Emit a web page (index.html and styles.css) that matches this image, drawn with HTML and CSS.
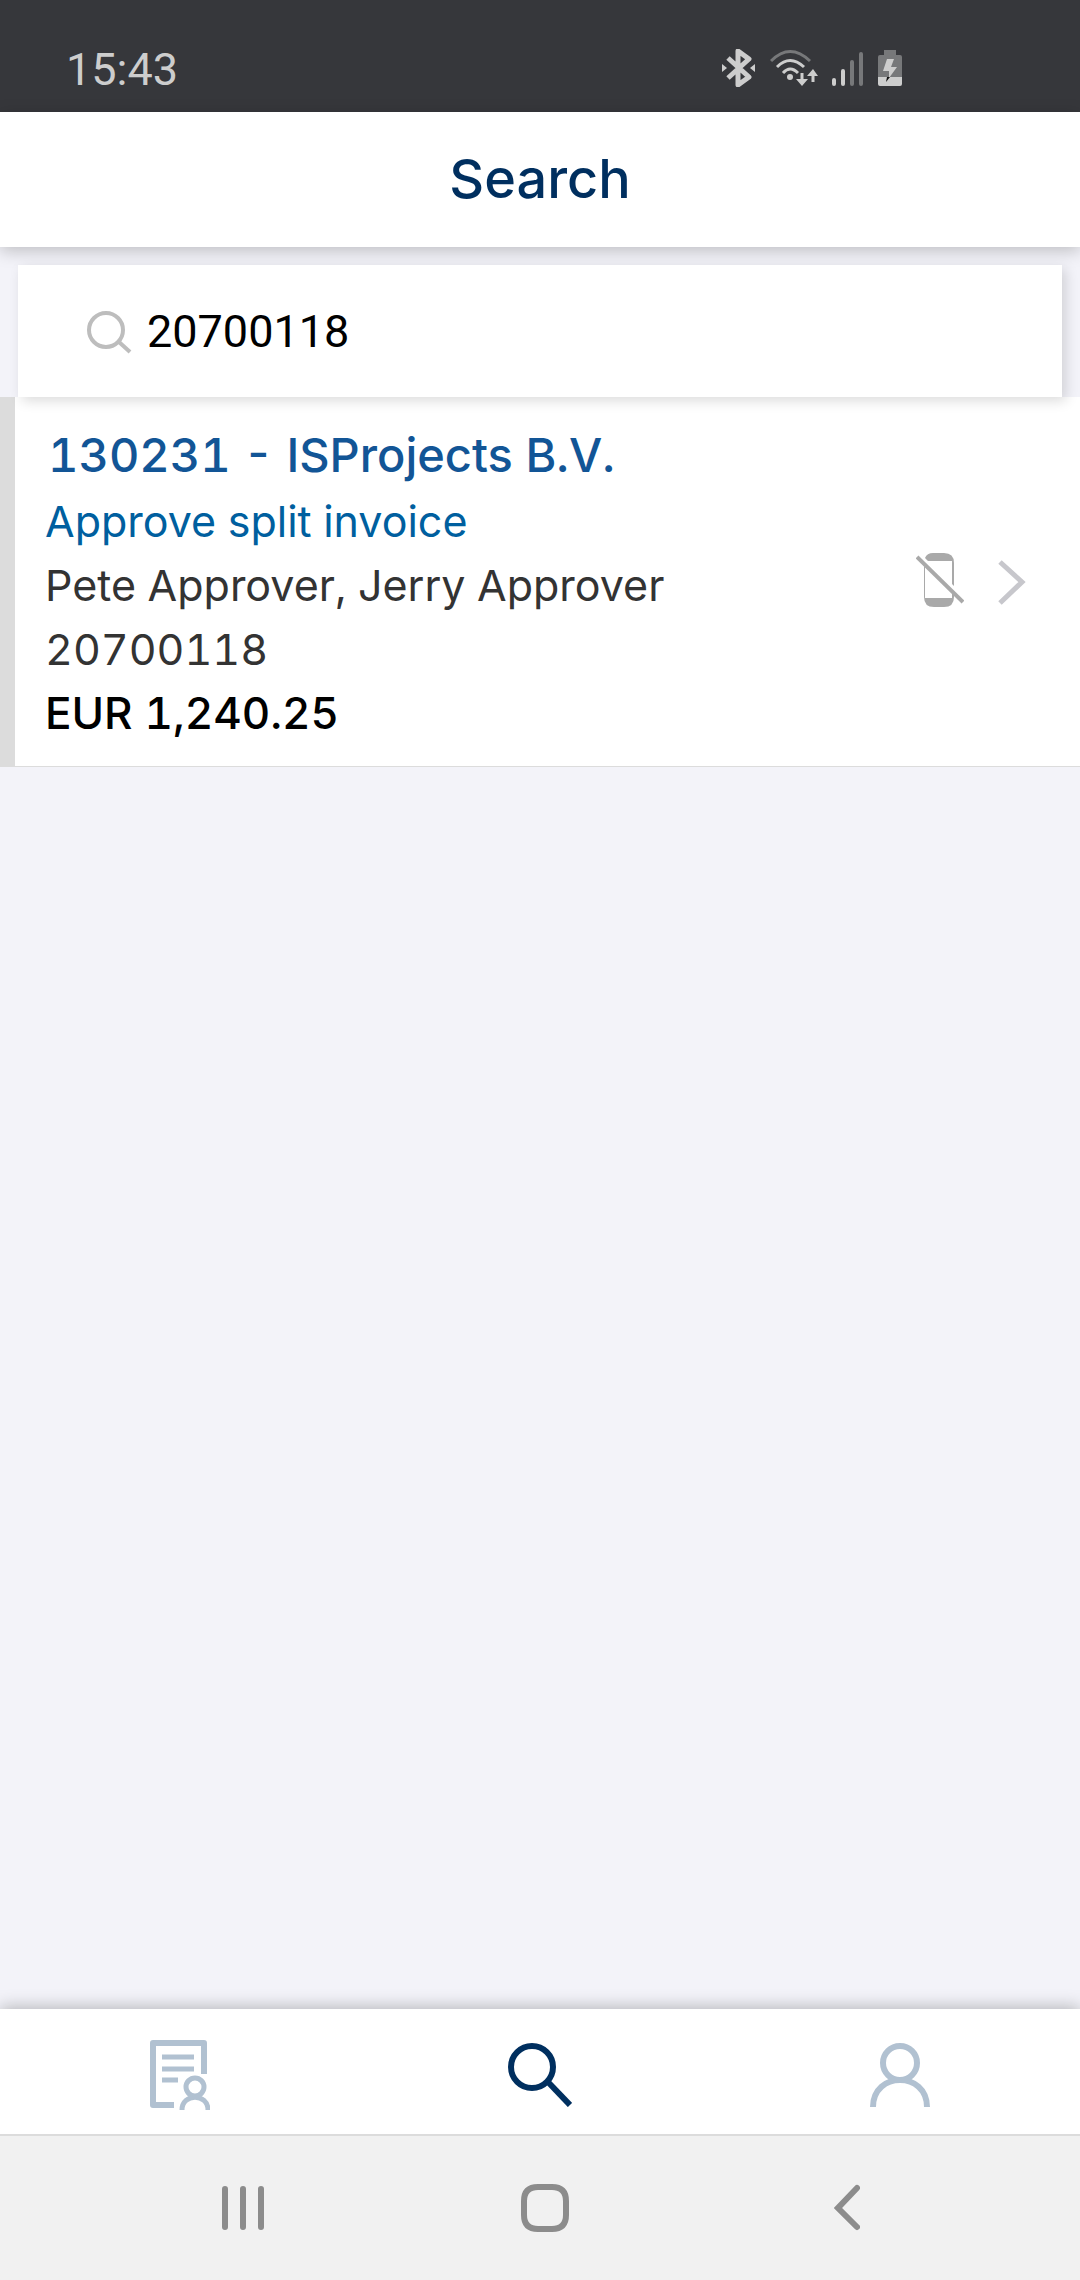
FILE: index.html
```html
<!DOCTYPE html>
<html lang="en">
<head>
<meta charset="utf-8">
<meta name="viewport" content="width=device-width">
<title>Search</title>
<link rel="stylesheet" href="styles.css">
</head>
<body>
<div class="status-bar">
  <span class="clock">15:43</span>
  <div class="status-icons">
    <svg width="34" height="38" viewBox="0 0 34 38" aria-hidden="true"><path d="M6 9 L27 28 L16 36 V2 L27 10 L6 29" fill="none" stroke="#cdcdcd" stroke-width="5" stroke-linejoin="round"/><path d="M0 15 L5 19 L0 23Z M33 15 L28 19 L33 23Z" fill="#cdcdcd"/></svg>
    <svg width="48" height="38" viewBox="0 0 48 38" aria-hidden="true"><g fill="none" stroke-width="3"><path d="M1 12 Q20 -7 40 12" stroke="#77787a"/><path d="M7 18 Q20 5 34 18 M13 24 Q20 16 28 24" stroke="#cdcdcd"/><path d="M32 24 V33 M43 33 V24" stroke="#cdcdcd"/></g><circle cx="20" cy="28" r="3" fill="#cdcdcd"/><path d="M26 30 H38 L32 37Z M37 27 H48 L43 20Z" fill="#cdcdcd"/></svg>
    <svg width="32" height="38" viewBox="0 0 32 38" aria-hidden="true"><g stroke-width="4" stroke-linecap="round"><path d="M2 31 V35 M11 22 V35" stroke="#cdcdcd"/><path d="M20 13 V35 M29 5 V35" stroke="#77787a"/></g></svg>
    <svg width="24" height="38" viewBox="0 0 24 38" aria-hidden="true"><path d="M6 1 H18 V6 H22 Q24 6 24 8 V28 H0 V8 Q0 6 2 6 H6Z" fill="#77787a"/><path d="M0 28 H24 V35 Q24 37 22 37 H2 Q0 37 0 35Z M9 10 H16 L13 18 H19 L11 29 L11 22 H5Z" fill="#cdcdcd"/><path d="M9 28 H12 L8 33Z" fill="#111"/></svg>
  </div>
</div>

<header class="app-header"><h1 class="page-title">Search</h1></header>

<main class="content">
  <label class="search-card">
    <svg width="46" height="46" viewBox="0 0 46 46" fill="none" stroke="#bdbdbd" stroke-width="4" aria-hidden="true"><circle cx="20" cy="21" r="17"/><path d="M33 33 L44 43"/></svg>
    <input class="search-input" type="text" value="20700118" aria-label="Search">
  </label>
  <a class="result" href="#">
    <span class="result-text">
      <span class="result-title">130231 - ISProjects B.V.</span>
      <span class="result-step">Approve split invoice</span>
      <span class="result-line">Pete Approver, Jerry Approver</span>
      <span class="result-line">20700118</span>
      <span class="result-amount">EUR 1,240.25</span>
    </span>
    <svg width="48" height="62" viewBox="0 0 48 62" aria-hidden="true"><path d="M9 6 Q11 1 17 1 H28 Q38 1 38 11 V34 L36 32 V9 H12Z M8 14 L9 15 V46 H36 V41 L38 43 V45 Q38 55 28 55 H18 Q8 55 8 45Z" fill="#a9a9a9"/><path d="M1 5 L47 50" stroke="#a9a9a9" stroke-width="4"/></svg>
    <svg width="28" height="46" viewBox="0 0 28 46" fill="none" stroke="#c7c7cc" stroke-width="5" aria-hidden="true"><path d="M2 2 L24 22 L2 43"/></svg>
  </a>
</main>

<nav class="tab-bar" aria-label="Main">
  <button class="tab" type="button" aria-label="Approvals">
    <svg width="60" height="70" viewBox="0 0 60 70" fill="none" stroke="#b1c1d1" aria-hidden="true"><path d="M24 65 H3 V3 H54 V34" stroke-width="6" stroke-linejoin="round"/><path d="M12 17 H44 M12 29 H44 M12 40 H28" stroke-width="5"/><circle cx="45" cy="47" r="9" stroke-width="5"/><path d="M32 70 C32 53 58 53 58 70" stroke-width="5"/></svg>
  </button>
  <button class="tab" type="button" aria-label="Search" aria-current="page">
    <svg width="64" height="64" viewBox="0 0 64 64" fill="none" stroke="#002f5f" stroke-width="6" aria-hidden="true"><circle cx="24" cy="24" r="21"/><path d="M40 39 L62 62"/></svg>
  </button>
  <button class="tab" type="button" aria-label="Profile">
    <svg width="60" height="64" viewBox="0 0 60 64" fill="none" stroke="#b1c1d1" stroke-width="6" aria-hidden="true"><circle cx="30" cy="20" r="17"/><path d="M3 64 C3 28 57 28 57 64"/></svg>
  </button>
</nav>

<div class="system-nav">
  <button class="system-button" type="button" aria-label="Recent apps">
    <svg width="42" height="48" viewBox="0 0 42 48" stroke="#8c8c8c" stroke-width="6" stroke-linecap="round" aria-hidden="true"><path d="M3 5 V43 M21 5 V43 M39 5 V43"/></svg>
  </button>
  <button class="system-button" type="button" aria-label="Home">
    <svg width="48" height="48" viewBox="0 0 48 48" fill="none" stroke="#8c8c8c" stroke-width="6" aria-hidden="true"><path d="M17 3 H31 Q45 3 45 17 V31 Q45 45 31 45 H17 Q3 45 3 31 V17 Q3 3 17 3Z"/></svg>
  </button>
  <button class="system-button" type="button" aria-label="Back">
    <svg width="26" height="48" viewBox="0 0 26 48" fill="none" stroke="#8c8c8c" stroke-width="6" stroke-linecap="round" aria-hidden="true"><path d="M23 4 L4 24 L23 43"/></svg>
  </button>
</div>
</body>
</html>
```
FILE: styles.css
```css
* { box-sizing: border-box; }

body {
  margin: 0;
  min-height: 100vh;
  display: flex;
  flex-direction: column;
  background: #f3f3f9;
  font-family: Inter, "Liberation Sans", sans-serif;
}

svg { display: block; flex: none; }

button {
  border: 0;
  padding: 0;
  background: none;
}

.status-bar {
  display: flex;
  align-items: center;
  justify-content: space-between;
  height: 112px;
  padding: 24px 178px 0 66px;
  background: #36373b;
}

.clock {
  padding-top: 4px;
  font: 45px/56px Roboto, sans-serif;
  color: #cdcdcd;
}

.status-icons {
  display: flex;
  align-items: center;
  gap: 14px;
}

.app-header {
  position: relative;
  display: flex;
  align-items: center;
  justify-content: center;
  height: 135px;
  padding-bottom: 2px;
  background: #fff;
  box-shadow: 0 4px 16px rgba(0, 0, 0, 0.22);
}

.page-title {
  margin: 0;
  font-size: 54px;
  line-height: 68px;
  font-weight: 500;
  color: #002f5f;
}

.content {
  flex: 1;
  padding-top: 18px;
}

.search-card {
  position: relative;
  display: flex;
  align-items: center;
  gap: 15px;
  height: 132px;
  margin: 0 18px;
  padding: 2px 68px 0;
  background: #fff;
  box-shadow: 4px 4px 12px rgba(0, 0, 0, 0.14);
}

.search-input {
  flex: 1;
  min-width: 0;
  border: 0;
  padding: 0;
  outline: 0;
  background: none;
  font: 45px/56px Roboto, sans-serif;
  color: #000;
}

.result {
  display: flex;
  align-items: center;
  padding: 24px 54px 21px 30px;
  border-left: 15px solid #dcdcdc;
  border-bottom: 1px solid #dcdcdc;
  background: #fff;
  color: #333;
  text-decoration: none;
  gap: 34px;
}

.result-text {
  flex: 1;
  display: flex;
  flex-direction: column;
  font-size: 43px;
  line-height: 64px;
  font-variant-numeric: tabular-nums;
}

.result-title {
  padding: 0 3px;
  font-size: 47px;
  line-height: 68px;
  font-weight: 500;
  color: #125596;
}

.result-step { color: #005f9f; }

.result-amount {
  font-size: 44px;
  font-weight: 500;
  color: #000;
}

.tab-bar {
  position: relative;
  display: grid;
  grid-template-columns: repeat(3, 1fr);
  height: 127px;
  border-bottom: 2px solid #dcdcdc;
  background: #fff;
  box-shadow: 0 -2px 16px rgba(0, 0, 0, 0.26);
}

.tab,
.system-button {
  display: flex;
  align-items: center;
  justify-content: center;
}

.tab { padding-top: 6px; }

.system-nav {
  position: relative;
  display: grid;
  grid-template-columns: repeat(3, 1fr);
  height: 144px;
  padding: 0 82px 0 92px;
  background: #f1f1f1;
}
```
